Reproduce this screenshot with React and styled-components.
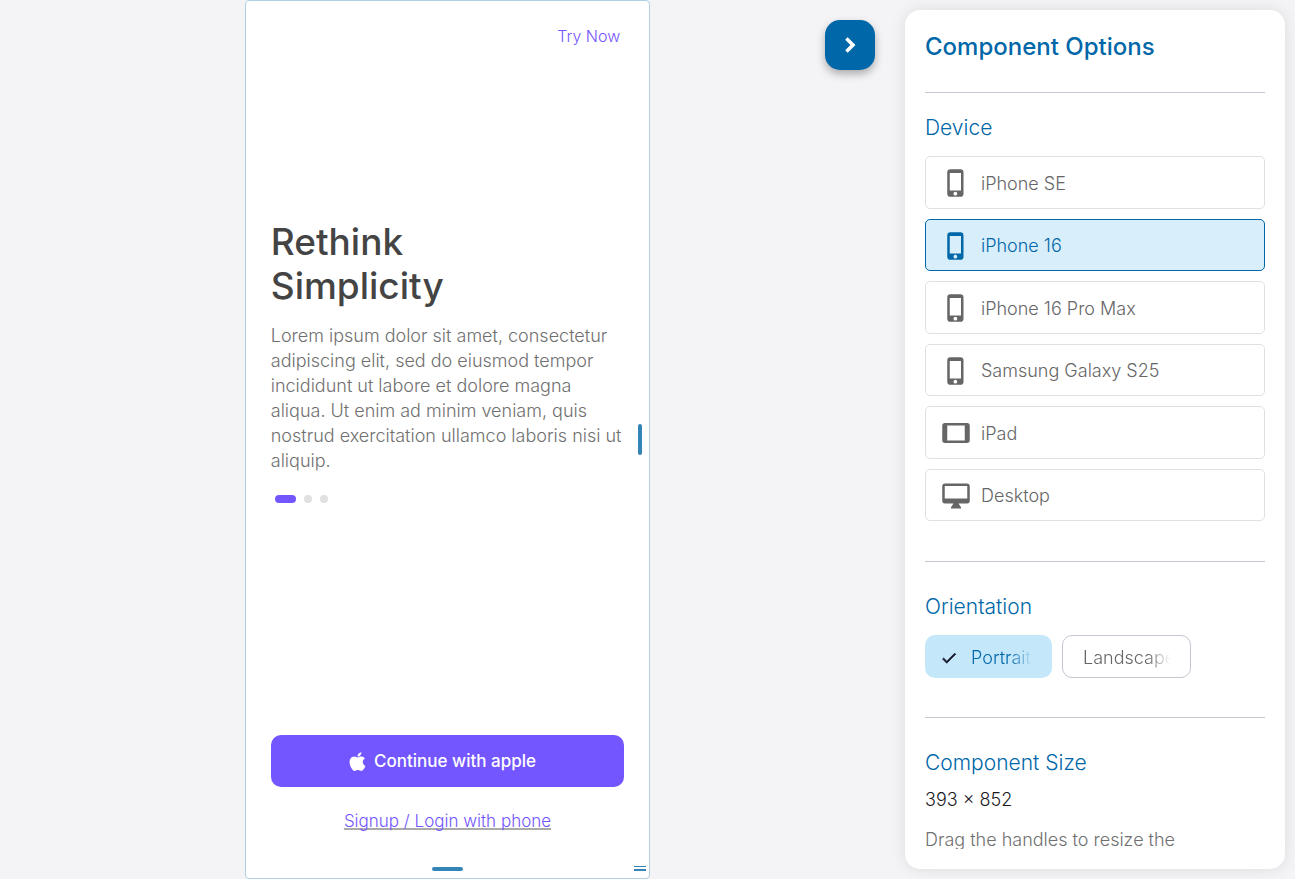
import React, { useState } from "react";
import styled, { createGlobalStyle } from "styled-components";
import {
  MdCheck,
  MdChevronRight,
  MdPhoneIphone,
  MdTablet,
} from "react-icons/md";

const Global = createGlobalStyle`
  *, *::before, *::after { box-sizing: border-box; }
  body {
    margin: 0;
    background: #f4f4f7;
    font-family: Inter, "Liberation Sans", sans-serif;
    font-weight: 300;
    color: #666;
  }
  button { font: inherit; cursor: pointer; }
  h1, h2, h3, p { margin: 0; }
`;

const Page = styled.div`
  display: flex;
  height: 100vh;
`;

const Stage = styled.main`
  position: relative;
  flex: 1;
  min-width: 0;
  display: flex;
  justify-content: center;
`;

const Phone = styled.section`
  position: relative;
  height: 100%;
  aspect-ratio: 393 / 852;
  display: flex;
  flex-direction: column;
  padding: 22px 25px 44px;
  background: #fff;
  border: 1px solid #b0cfe3;
  border-radius: 4px;
`;

const TryNow = styled.button`
  align-self: flex-end;
  margin-right: 4px;
  padding: 0;
  border: 0;
  background: none;
  color: #7356ff;
  font-size: 16px;
  line-height: 26px;
`;

const Spacer = styled.div`
  flex: ${(p) => p.$grow};
`;

const Headline = styled.h1`
  color: #444;
  font-size: 37px;
  line-height: 44px;
  font-weight: 500;
`;

const Lead = styled.p`
  margin-top: 15px;
  color: #707070;
  font-size: 18px;
  line-height: 25px;
`;

const Dots = styled.div`
  display: flex;
  gap: 8px;
  margin: 22px 4px 3px;
`;

const Dot = styled.span`
  width: ${(p) => (p.$active ? 21 : 8)}px;
  height: 8px;
  border-radius: 4px;
  background: ${(p) => (p.$active ? "#7356ff" : "#e0e0e0")};
`;

const AppleButton = styled.button`
  display: flex;
  align-items: center;
  justify-content: center;
  gap: 4px;
  height: 52px;
  padding: 0 14px 0 0;
  border: 0;
  border-radius: 10px;
  background: #7356ff;
  color: #fff;
  font-size: 17px;
  font-weight: 500;
`;

const PhoneLink = styled.a`
  align-self: center;
  margin-top: 21px;
  color: #7356ff;
  font-size: 17px;
  line-height: 26px;
  text-decoration: underline 2px #aaa;
  text-underline-offset: 1px;
  text-decoration-skip-ink: none;
`;

const SideHandle = styled.span`
  position: absolute;
  right: 7px;
  top: calc(50% - 16px);
  width: 4px;
  height: 31px;
  border-radius: 2px;
  background: #3485b7;
`;

const BottomHandle = styled.span`
  position: absolute;
  bottom: 7px;
  left: calc(50% - 15px);
  width: 31px;
  height: 4px;
  border-radius: 2px;
  background: #3485b7;
`;

const CornerHandle = styled.span`
  position: absolute;
  right: 3px;
  bottom: 7px;
  width: 12px;
  height: 5px;
  border: solid #3485b7;
  border-width: 1px 0 2px;
`;

const Toggle = styled.button`
  position: absolute;
  top: 20px;
  right: 20px;
  display: grid;
  place-items: center;
  width: 50px;
  height: 50px;
  padding: 0;
  border: 0;
  border-radius: 15px;
  background: #0067a8;
  color: #fff;
  box-shadow: 0 4px 8px rgba(0, 0, 0, 0.3);

  svg { stroke-width: 0; }
  svg path:last-child { stroke: currentColor; stroke-width: 1; }
`;

const Panel = styled.aside`
  flex: 0 0 380px;
  margin: 10px;
  padding: 20px;
  border-radius: 15px;
  background: #fff;
  box-shadow: 0 0 15px rgba(0, 0, 0, 0.1);
`;

const PanelScroll = styled.div`
  height: 100%;
  overflow-y: auto;
  scrollbar-width: none;
`;

const PanelTitle = styled.h2`
  color: #0067a8;
  font-size: 24px;
  line-height: 34px;
  font-weight: 500;
`;

const Divider = styled.hr`
  height: 1px;
  margin: ${(p) => p.$above}px 0 ${(p) => p.$below}px;
  border: 0;
  background: #c6c5d0;
`;

const SectionTitle = styled.h3`
  color: #0067a8;
  font-size: 21px;
  line-height: 28px;
  font-weight: 300;
`;

const DeviceList = styled.div`
  display: grid;
  grid-auto-rows: 1fr;
  gap: 10px;
  height: 365px;
  margin-top: 14px;
`;

const DeviceButton = styled.button`
  display: flex;
  align-items: center;
  gap: 10px;
  padding: 2px 15px 0;
  border: 1px solid ${(p) => (p.$active ? "#0067a8" : "#e0e0e0")};
  border-radius: 5px;
  background: ${(p) => (p.$active ? "#d9eefb" : "#fff")};
  color: ${(p) => (p.$active ? "#0067a8" : "#666")};
  font-size: 18px;
`;

const Chips = styled.div`
  display: flex;
  gap: 10px;
  margin-top: 14px;
`;

const Chip = styled.button`
  display: flex;
  align-items: center;
  gap: 13px;
  height: 43px;
  padding: ${(p) => (p.$active ? "2px 20px 0 15px" : "2px 20px 0")};
  border: ${(p) => (p.$active ? "0" : "1px solid #c6c5d0")};
  border-radius: 10px;
  background: ${(p) => (p.$active ? "#c5e7fa" : "#fff")};
  color: ${(p) => (p.$active ? "#0067a8" : "#666")};
  font-size: 18px;

  svg { color: #1a1b2e; stroke-width: 0; }
  svg path:last-child { stroke: currentColor; stroke-width: 1; }
`;

const ChipLabel = styled.span`
  width: ${(p) => p.$width}px;
  overflow: hidden;
  text-align: left;
  white-space: nowrap;
  mask-image: linear-gradient(to left, transparent, #000 22px);
`;

const SizeValue = styled.p`
  margin-top: 10px;
  color: #1b1b1f;
  font-size: 18px;
  line-height: 26px;
`;

const Hint = styled.p`
  margin-top: 14px;
  color: #707070;
  font-size: 18px;
  line-height: 26px;
`;

function AppleIcon({ size }) {
  return (
    <svg width={size} height={size} viewBox="0 0 24 24" fill="currentColor" aria-hidden="true">
      <path d="M17.05 20.28c-.98.95-2.05.8-3.08.35-1.09-.46-2.09-.48-3.24 0-1.44.62-2.2.44-3.06-.35C2.79 15.25 3.51 7.59 9.05 7.31c1.35.07 2.29.74 3.08.8 1.18-.24 2.31-.93 3.57-.84 1.51.12 2.65.72 3.4 1.8-3.12 1.87-2.38 5.98.48 7.13-.57 1.5-1.31 2.99-2.54 4.09zM12.03 7.25c-.15-2.23 1.66-4.07 3.74-4.25.29 2.58-2.34 4.5-3.74 4.25z" />
    </svg>
  );
}

function DesktopIcon({ size }) {
  return (
    <svg width={size} height={size} viewBox="0 0 24 24" fill="currentColor" aria-hidden="true">
      <path d="M21 2H3c-1.1 0-2 .9-2 2v12c0 1.1.9 2 2 2h7l-2 3v1h8v-1l-2-3h7c1.1 0 2-.9 2-2V4c0-1.1-.9-2-2-2zm0 12H3V4h18v10z" />
    </svg>
  );
}

const devices = [
  ["iPhone SE", MdPhoneIphone],
  ["iPhone 16", MdPhoneIphone],
  ["iPhone 16 Pro Max", MdPhoneIphone],
  ["Samsung Galaxy S25", MdPhoneIphone],
  ["iPad", MdTablet],
  ["Desktop", DesktopIcon],
];

const orientations = [
  ["Portrait", 61],
  ["Landscape", 87],
];

export default function App() {
  const [device, setDevice] = useState("iPhone 16");
  const [orientation, setOrientation] = useState("Portrait");

  return (
    <>
      <Global />
      <Page>
        <Stage>
          <Phone>
            <TryNow>Try Now</TryNow>
            <Spacer $grow={3} />
            <Headline>
              Rethink
              <br />
              Simplicity
            </Headline>
            <Lead>
              Lorem ipsum dolor sit amet, consectetur adipiscing elit, sed do
              eiusmod tempor incididunt ut labore et dolore magna aliqua. Ut
              enim ad minim veniam, quis nostrud exercitation ullamco laboris
              nisi ut aliquip.
            </Lead>
            <Dots>
              <Dot $active />
              <Dot />
              <Dot />
            </Dots>
            <Spacer $grow={4} />
            <AppleButton>
              <AppleIcon size={25} />
              Continue with apple
            </AppleButton>
            <PhoneLink href="#phone">Signup / Login with phone</PhoneLink>
            <SideHandle />
            <BottomHandle />
            <CornerHandle />
          </Phone>
          <Toggle aria-label="Hide options">
            <MdChevronRight size={28} />
          </Toggle>
        </Stage>
        <Panel>
          <PanelScroll>
            <PanelTitle>Component Options</PanelTitle>
            <Divider $above={28} $below={21} />
            <SectionTitle>Device</SectionTitle>
            <DeviceList>
              {devices.map(([name, Icon]) => (
                <DeviceButton
                  key={name}
                  $active={name === device}
                  aria-pressed={name === device}
                  onClick={() => setDevice(name)}
                >
                  <Icon size={30} />
                  {name}
                </DeviceButton>
              ))}
            </DeviceList>
            <Divider $above={40} $below={31} />
            <SectionTitle>Orientation</SectionTitle>
            <Chips>
              {orientations.map(([name, width]) => (
                <Chip
                  key={name}
                  $active={name === orientation}
                  aria-pressed={name === orientation}
                  onClick={() => setOrientation(name)}
                >
                  {name === orientation && <MdCheck size={18} />}
                  <ChipLabel $width={width}>{name}</ChipLabel>
                </Chip>
              ))}
            </Chips>
            <Divider $above={39} $below={31} />
            <SectionTitle>Component Size</SectionTitle>
            <SizeValue>393 × 852</SizeValue>
            <Hint>Drag the handles to resize the</Hint>
          </PanelScroll>
        </Panel>
      </Page>
    </>
  );
}
